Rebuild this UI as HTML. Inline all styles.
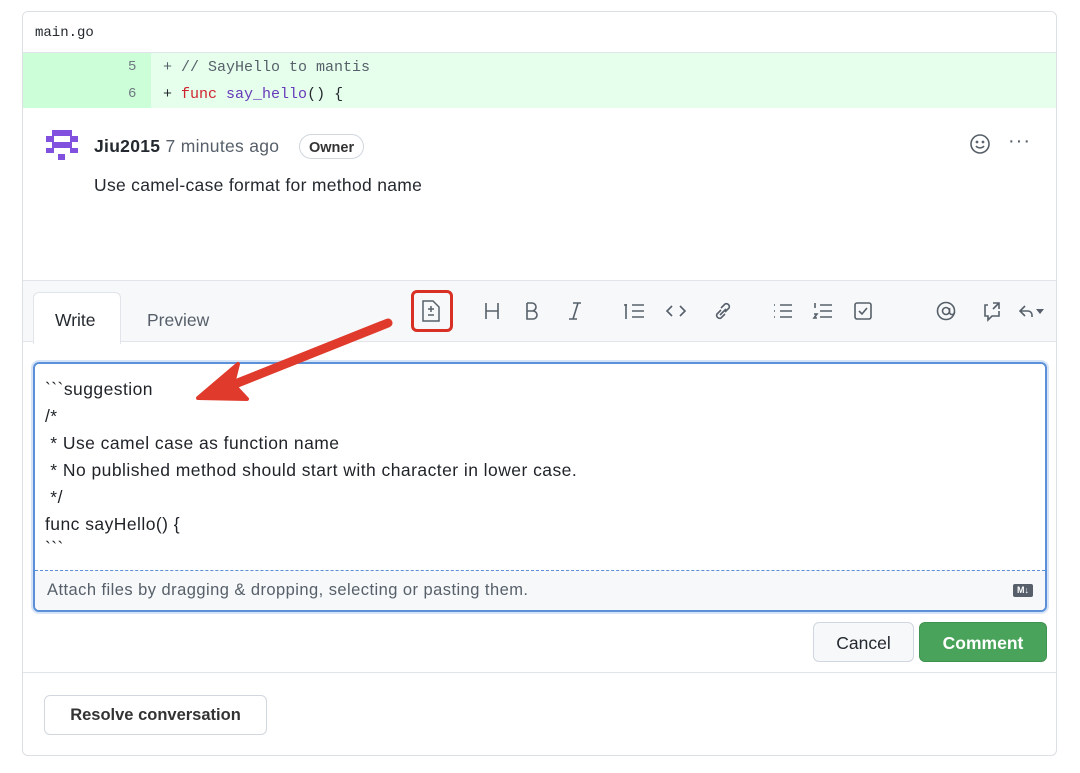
<!DOCTYPE html>
<html><head><meta charset="utf-8"><style>
*{box-sizing:border-box;margin:0;padding:0}
body{width:1080px;height:773px;background:#fff;font-family:"Liberation Sans",sans-serif;position:relative;overflow:hidden;color:#24292f}
.box{position:absolute;left:22px;top:11px;width:1035px;height:745px;border:1px solid #dcdfe3;border-radius:6px;overflow:hidden}
.mono{font-family:"Liberation Mono",monospace}
.hdr{position:absolute;left:0;top:0;width:100%;height:41px;border-bottom:1px solid #e1e4e8;background:#fff;font-size:14px;padding:13px 0 0 12px}
.diff{position:absolute;left:0;top:41px;width:100%;height:55px;background:#e6ffec}
.gut{position:absolute;left:0;top:0;width:128px;height:55px;background:#ccffd8}
.row{position:absolute;font-size:15px;color:#24292f}
.ln{position:absolute;font-size:14px;color:#6e7781}
.ab{position:absolute;font-size:17.5px;letter-spacing:.3px}
.tb{position:absolute;left:0;top:268px;width:100%;height:62px;background:#f6f8fa;border-top:1px solid #e1e4e8;border-bottom:1px solid #e1e4e8}
.tab{position:absolute;font-size:17.5px}
.ta{position:absolute;left:10px;top:350px;width:1014px;height:250px;border:2px solid #5b8fd8;border-radius:6px;background:#fff;box-shadow:0 0 0 2px #d6e4f7;overflow:hidden}
.ta .t{position:absolute;left:10px;font-size:17.5px;letter-spacing:.45px;color:#1f2328;white-space:pre}
.foot{position:absolute;left:0;bottom:0;width:100%;height:40px;border-top:1px dashed #5b8fd8;background:#f6f8fa;font-size:16.5px;letter-spacing:.45px;color:#57606a;padding:10px 12px}
.btn{position:absolute;border:1px solid #d0d7de;border-radius:6px;background:#f6f8fa;font-size:17.5px;text-align:center;color:#24292f}
svg{position:absolute}
</style></head><body>
<div class="box">
 <div class="hdr mono">main.go</div>
 <div class="diff"><div class="gut"></div>
  <div class="ln mono" style="left:105px;top:6px">5</div>
  <div class="ln mono" style="left:105px;top:33px">6</div>
  <div class="row mono" style="left:140px;top:6px;color:#57606a">+ // SayHello to mantis</div>
  <div class="row mono" style="left:140px;top:33px">+ <span style="color:#cf222e">func</span> <span style="color:#6639ba">say_hello</span>() {</div>
 </div>
 <svg style="left:22px;top:117px" width="34" height="36" viewBox="0 0 34 36"><g fill="#8250df"><rect x="7" y="1" width="20" height="6"/><rect x="1" y="7" width="8" height="6"/><rect x="25" y="7" width="8" height="6"/><rect x="7" y="13" width="20" height="6"/><rect x="1" y="19" width="8" height="5"/><rect x="25" y="19" width="8" height="5"/><rect x="13" y="25" width="7" height="6"/></g></svg>
 <div class="ab" style="left:71px;top:124px"><b>Jiu2015</b> <span style="color:#57606a">7 minutes ago</span></div>
 <div style="position:absolute;left:276px;top:122px;height:25px;padding:5px 9px 0;border:1px solid #d0d7de;border-radius:13px;font-size:14.5px;font-weight:bold;color:#333">Owner</div>
 <div class="ab" style="left:71px;top:163px">Use camel-case format for method name</div>
 <svg style="left:946px;top:121px" width="22" height="22" viewBox="0 0 22 22" fill="none" stroke="#57606a" stroke-width="1.6"><circle cx="11" cy="11" r="9"/><circle cx="8" cy="9" r=".6"/><circle cx="14" cy="9" r=".6"/><path d="M7 13c2 2.5 6 2.5 8 0"/></svg>
 <div style="position:absolute;left:985px;top:118px;font-size:20px;color:#57606a;letter-spacing:1px">···</div>
 <div class="tb">
  <div style="position:absolute;left:10px;top:11px;width:88px;height:52px;background:#fff;border:1px solid #e1e4e8;border-bottom:none;border-radius:6px 6px 0 0"></div>
  <div class="tab" style="left:32px;top:29px">Write</div>
  <div class="tab" style="left:124px;top:29px;color:#57606a">Preview</div>
  <div style="position:absolute;left:388px;top:9px;width:42px;height:42px;border:3px solid #d93025;border-radius:6px"></div>
  <svg style="left:398px;top:19px" width="20" height="22" viewBox="0 0 20 22" fill="none" stroke="#57606a" stroke-width="1.5"><path d="M2 1h10l6 6v14H2z"/><path d="M10 6v6M7 9h6M7 15h6"/></svg>
  <svg style="left:460px;top:19px" width="560" height="22" viewBox="0 0 560 22" fill="none" stroke="#57606a" stroke-width="1.6">
   <path d="M3 3v16M15 3v16M3 11h12"/>
   <path d="M44 3v16h6a4 4 0 0 0 0-8h-6M44 11h5a4 4 0 0 0 0-8h-5"/>
   <path d="M90 3h8M86 19h8M95 3l-5 16"/>
   <path d="M143 4v15M149 5h12M149 11h12M149 17h12M141 5h3"/>
   <path d="M189 6l-5 5 5 5M197 6l5 5-5 5"/>
   <path d="M238 10l-4 4a3 3 0 0 0 4 4l4-4M242 12l4-4a3 3 0 0 0-4-4l-4 4M237 15l6-6"/>
   <path d="M297 5h12M297 11h12M297 17h12M291 5h1M291 11h1M291 17h1"/>
   <path d="M337 5h12M337 11h12M337 17h12M332 3v5M331 14h3l-3 4h3"/>
   <rect x="372" y="3" width="16" height="16" rx="2"/><path d="M376 11l3 3 5-6"/>
   <circle cx="463" cy="11" r="8.5"/><circle cx="463" cy="11" r="3.5"/><path d="M466.5 8v4a2.5 2.5 0 0 0 5 0"/>
   <path d="M505 5h-3v11h3v4l4-4h7v-5M510 3h6v6M516 3l-6 6"/>
   <path d="M542 6l-5 5 5 5M537 11h8a4 4 0 0 1 4 4v2"/>
  </svg>
  <div style="position:absolute;left:1013px;top:28px;border:4px solid transparent;border-top:5px solid #57606a"></div>
 </div>
 <div class="ta">
  <div class="t" style="top:15px">&#96;&#96;&#96;suggestion</div>
  <div class="t" style="top:42px">/*</div>
  <div class="t" style="top:69px"> * Use camel case as function name</div>
  <div class="t" style="top:96px"> * No published method should start with character in lower case.</div>
  <div class="t" style="top:123px"> */</div>
  <div class="t" style="top:150px">func sayHello() {</div>
  <div class="t" style="top:174px">&#96;&#96;&#96;</div>
  <div class="foot">Attach files by dragging &amp; dropping, selecting or pasting them.
   <div style="position:absolute;right:12px;top:13px;width:20px;height:13px;background:#57606a;border-radius:2px;color:#fff;font-size:9px;font-weight:bold;line-height:13px;text-align:center;letter-spacing:0">M↓</div></div>
 </div>
 <div class="btn" style="left:790px;top:610px;width:101px;height:40px;padding-top:10px;background:#f6f8fa">Cancel</div>
 <div class="btn" style="left:896px;top:610px;width:128px;height:40px;padding-top:10px;background:#4aa35a;border-color:#3f9350;color:#fff;font-weight:bold">Comment</div>
 <div style="position:absolute;left:0;top:660px;width:100%;border-top:1px solid #e1e4e8"></div>
 <div class="btn" style="left:21px;top:683px;width:223px;height:40px;padding-top:10px;background:#fff;font-weight:bold;font-size:16.5px;color:#333">Resolve conversation</div>
</div>
<svg style="left:0;top:0" width="1080" height="773"><path d="M388 323L225 388" stroke="#e03a2c" stroke-width="9" stroke-linecap="round"/><path d="M198 398l40-34-5 20 14 15z" fill="#e03a2c" stroke="#e03a2c" stroke-width="4" stroke-linejoin="round"/></svg>
</body></html>
